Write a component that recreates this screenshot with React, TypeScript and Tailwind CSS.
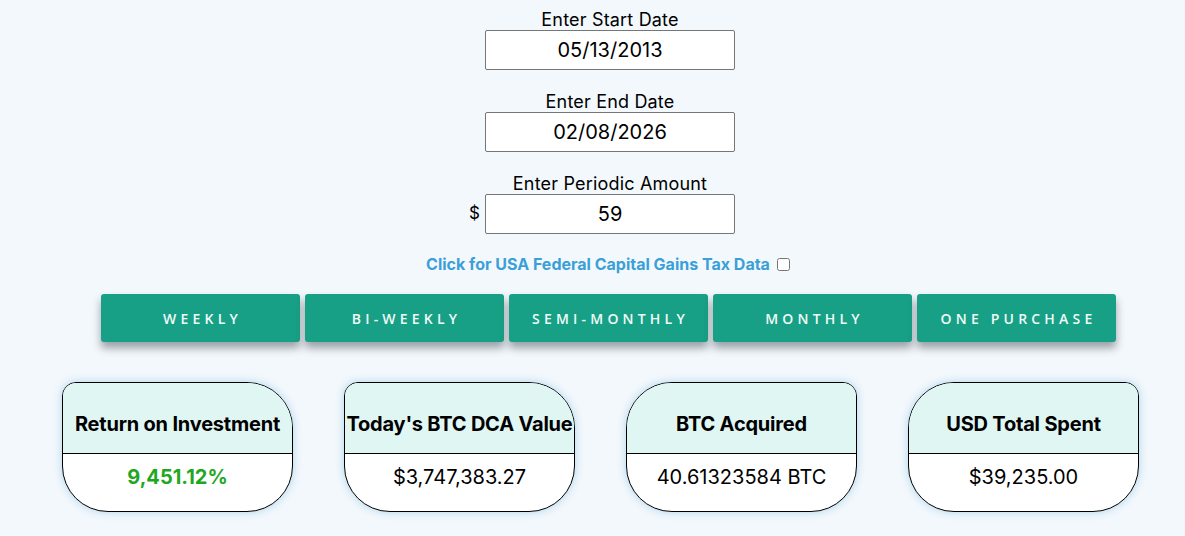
import React, { useState } from 'react';

const fieldFont = { fontFamily: 'Inter, "Noto Sans", sans-serif' };

type Stat = {
  title: string;
  value: string;
  shape: string;
  valueClass: string;
};

const stats: Stat[] = [
  {
    title: 'Return on Investment',
    value: '9,451.12%',
    shape: 'rounded-tl-[14px] rounded-tr-[46px] rounded-br-[46px] rounded-bl-[46px]',
    valueClass: 'font-bold text-[#1fa81f]',
  },
  {
    title: "Today's BTC DCA Value",
    value: '$3,747,383.27',
    shape: 'rounded-tl-[14px] rounded-tr-[46px] rounded-br-[46px] rounded-bl-[46px]',
    valueClass: 'text-black',
  },
  {
    title: 'BTC Acquired',
    value: '40.61323584 BTC',
    shape: 'rounded-tl-[46px] rounded-tr-[14px] rounded-br-[46px] rounded-bl-[46px]',
    valueClass: 'text-black',
  },
  {
    title: 'USD Total Spent',
    value: '$39,235.00',
    shape: 'rounded-tl-[46px] rounded-tr-[14px] rounded-br-[46px] rounded-bl-[46px]',
    valueClass: 'text-black',
  },
];

const periods = ['Weekly', 'Bi-Weekly', 'Semi-Monthly', 'Monthly', 'One Purchase'];

function Field({ label, value, prefix }: { label: string; value: string; prefix?: boolean }) {
  return (
    <div className="flex flex-col items-center">
      <label className="whitespace-nowrap pt-[1px] text-[18px] leading-[20px] tracking-[0.01em] text-black">{label}</label>
      <div className="relative">
        {prefix && (
          <span className="absolute right-full top-1/2 mr-[5px] -translate-y-1/2 text-[17px] text-black">$</span>
        )}
        <input
          readOnly
          value={value}
          className="h-[40px] w-[250px] rounded-[2px] border border-[#767676] bg-white text-center text-[20px] text-black outline-none"
          style={fieldFont}
        />
      </div>
    </div>
  );
}

export default function App() {
  const [taxData, setTaxData] = useState(false);

  return (
    <div className="min-h-screen w-full bg-[#f3f8fc] pt-[9px]" style={fieldFont}>
      <div className="ml-[35px] flex flex-col items-center">
        <div className="flex flex-col items-center gap-[21px]">
          <Field label="Enter Start Date" value="05/13/2013" />
          <Field label="Enter End Date" value="02/08/2026" />
          <Field label="Enter Periodic Amount" value="59" prefix />
        </div>

        <label className="mr-[4px] mt-[18px] flex h-[24px] items-center gap-[7px] text-[16px] font-bold text-[#3b9fd8]">
          Click for USA Federal Capital Gains Tax Data
          <input
            type="checkbox"
            checked={taxData}
            onChange={(e) => setTaxData(e.target.checked)}
            className="h-[13px] w-[13px]"
          />
        </label>

        <div className="mr-[4px] mt-[18px] flex gap-[5px]">
          {periods.map((p) => (
            <button
              key={p}
              className="h-[48px] w-[199px] rounded-[3px] bg-[#17a085] pl-[5px] text-[14px] font-semibold uppercase tracking-[0.3em] text-[#f0fbf8] shadow-[0_6px_8px_rgba(40,50,60,0.45)]"
              style={{ fontFamily: '"Open Sans", sans-serif' }}
            >
              {p}
            </button>
          ))}
        </div>
      </div>

      <div className="ml-[62px] mt-[40px] flex gap-[51px]">
        {stats.map((s) => (
          <div
            key={s.title}
            className={`h-[130px] w-[231px] overflow-hidden border border-black bg-white shadow-[0_0_8px_rgba(90,170,220,0.45)] ${s.shape}`}
          >
            <div className="flex h-[71px] items-center justify-center border-b border-black bg-[#e0f6f3] pt-[12px]">
              <span className="whitespace-nowrap text-[20px] font-bold tracking-[-0.01em] text-black">{s.title}</span>
            </div>
            <div className={`flex h-[57px] items-start justify-center pt-[8px] text-[20px] ${s.valueClass}`}>
              {s.value}
            </div>
          </div>
        ))}
      </div>
    </div>
  );
}
